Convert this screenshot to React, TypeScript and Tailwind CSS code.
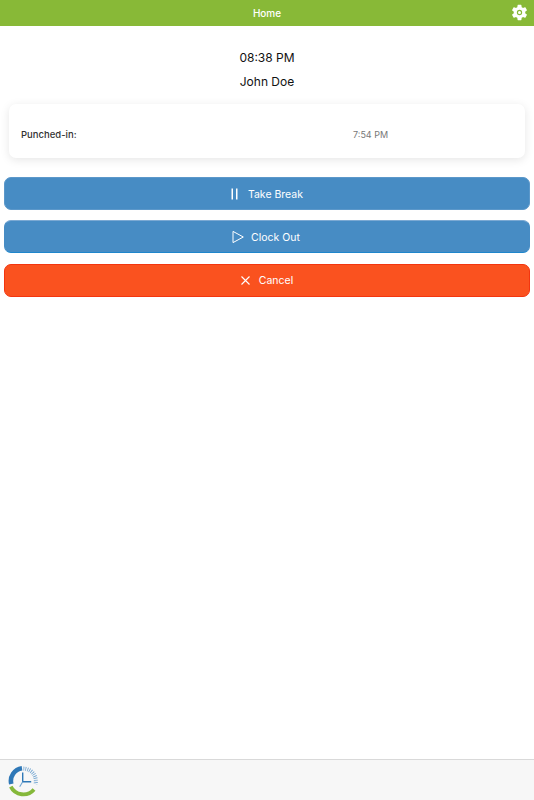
import { IoSettingsSharp } from 'react-icons/io5';

const PauseIcon = () => (
  <svg width="7" height="12" viewBox="0 0 7 12" fill="#fff">
    <rect x="0.5" y="0.5" width="1.5" height="11" />
    <rect x="5" y="0.5" width="1.5" height="11" />
  </svg>
);

const PlayIcon = () => (
  <svg width="12" height="12" viewBox="0 0 12 12" fill="none" stroke="#fff" strokeWidth="1">
    <path d="M1 .4v11.200L11.300 6z" strokeLinejoin="round" />
  </svg>
);

const CloseIcon = () => (
  <svg width="9" height="9" viewBox="0 0 9 9" fill="none" stroke="#fff" strokeWidth="1.100">
    <path d="M.5.5l8 8M8.500.5l-8 8" />
  </svg>
);

const Logo = () => (
  <svg width="32" height="32" viewBox="0 0 32 32" fill="none">
    <path d="M14 3.200A12.800 12.800 0 0 0 3.300 19" stroke="#2f78b7" strokeWidth="4.600" />
    <path d="M2.800 21.600A14 14 0 0 0 26 24.400" stroke="#85b83a" strokeWidth="3.800" />
    <path d="M15.500 3.600A12.500 12.500 0 0 1 27.500 19" stroke="#6fa3d0" strokeWidth="4" strokeDasharray="0.800 1.200" />
    <path d="M14.700 7.500v9.200h8.500" stroke="#2f78b7" strokeWidth="1.400" />
    <path d="M14.700 16.700l-3 5" stroke="#6fa3d0" strokeWidth="1.100" />
  </svg>
);

const actions = [
  { label: 'Take Break', icon: <PauseIcon />, color: 'bg-[#478cc4] border-[#5c98ca]', gap: 'gap-[10px]', text: 'pt-[2px]' },
  { label: 'Clock Out', icon: <PlayIcon />, color: 'bg-[#478cc4] border-[#478cc4] border-t-[#7ba9d3] border-b-[#1f86cc] pr-[2px]', gap: 'gap-[7px]', text: 'pt-[2px]' },
  { label: 'Cancel', icon: <CloseIcon />, color: 'bg-[#fa521f] border-[#f3350f] mt-[1px]', gap: 'gap-[9px]', text: 'pt-[1px]' },
];

export default function App() {
  return (
    <div className="flex flex-col h-[800px] bg-white font-['Inter',sans-serif]">
      <header className="relative flex items-center justify-center h-[26px] bg-[#88b937] text-white text-[10px] font-medium">
        Home
        <span className="absolute right-[6px] top-[4px]">
          <IoSettingsSharp className="w-[17px] h-[17px]" />
          <span className="absolute left-[7px] top-[7px] w-[3px] h-[3px] rounded-full bg-white" />
        </span>
      </header>

      <main className="flex-1 flex flex-col">
        <div className="mt-[22px] text-center text-[12px] leading-[20px] text-[#111]">08:38 PM</div>
        <div className="mt-[4px] text-center text-[12px] leading-[20px] text-[#111]">John Doe</div>

        <div className="mt-[12px] mx-[9px] h-[54px] bg-white rounded-[7px] shadow-[0_2px_10px_rgba(0,0,0,0.1)] grid grid-cols-2 items-center pl-[12px] pt-[8px]">
          <span className="text-[9.5px] font-medium text-[#333]">Punched-in:</span>
          <span className="text-[9px] text-[#777] pl-[80px]">7:54 PM</span>
        </div>

        <div className="mt-[19px] mx-[4px] flex flex-col gap-[10px]">
          {actions.map((action) => (
            <button
              key={action.label}
              className={`h-[33px] rounded-[7px] border text-white text-[10.5px] flex items-center justify-center ${action.gap} ${action.color}`}
            >
              {action.icon}
              <span className={action.text}>{action.label}</span>
            </button>
          ))}
        </div>
      </main>

      <footer className="h-[41px] bg-[#f7f7f7] border-t border-[#d9d9d9] pl-[8px] pt-[5px]">
        <Logo />
      </footer>
    </div>
  );
}
